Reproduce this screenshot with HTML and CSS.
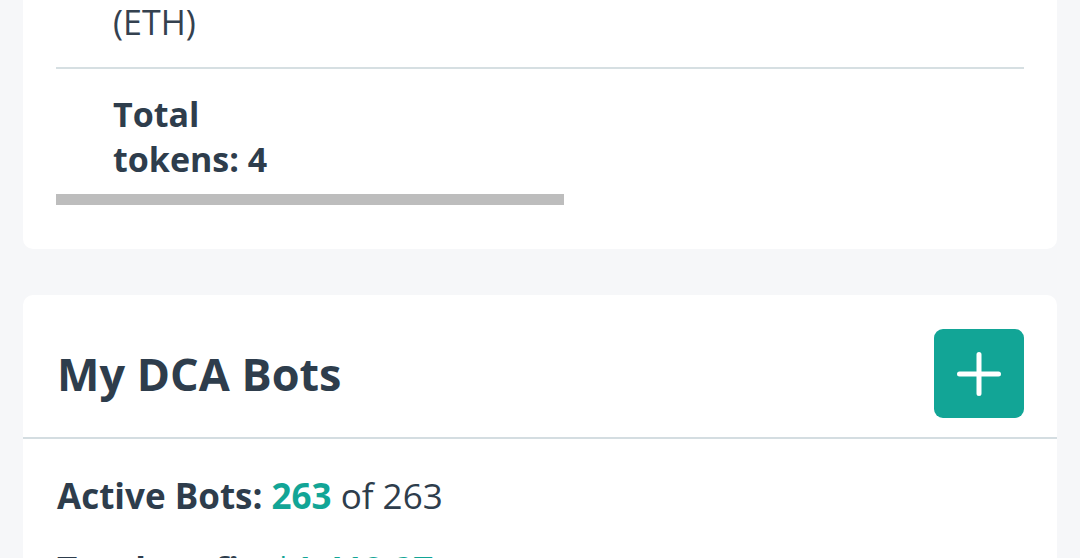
FILE: index.html
```html
<!DOCTYPE html>
<html>
<head>
    <title>Dashboard</title>
    <meta name="viewport" content="width=device-width, initial-scale=1" />
    <link rel="stylesheet" href="styles.css">
</head>
<body>
    <main class="page">
        <section class="card card-clipped">
            <div class="tokens">
                <div class="token-row bordered">
                    <div class="token-cell">(ETH)</div>
                </div>
                <div class="token-row">
                    <div class="token-cell total">Total tokens: 4</div>
                </div>
            </div>
            <div class="scrollbar"></div>
        </section>

        <section class="card">
            <header class="card-head">
                <h2>My DCA Bots</h2>
                <button type="button" class="add-btn" aria-label="Add bot">
                    <svg width="44" height="44" viewBox="0 0 44 44">
                        <path d="M22 2.5V41.5M2.5 22H41.5" stroke="#fff" stroke-width="5" stroke-linecap="round" fill="none" />
                    </svg>
                </button>
            </header>
            <div class="card-body">
                <p class="stat"><b>Active Bots:</b> <b class="teal">263</b> of 263</p>
                <p class="stat"><b>Total profit:</b> <b class="teal">$1,418.27</b></p>
            </div>
        </section>
    </main>
</body>
</html>
```

FILE: styles.css
```css
body {
    margin: 0;
    background-color: #f6f7f9;
    font-family: "Open Sans", "Noto Sans", sans-serif;
    color: #2e3d4c;
}

.page {
    padding: 0 23px;
}

.card {
    background-color: #fff;
    border-radius: 10px;
    margin-bottom: 46px;
}

.card-clipped {
    border-top-left-radius: 0;
    border-top-right-radius: 0;
    padding: 0 33px 44px 33px;
}

.token-row {
    padding: 23px 0 0 57px;
}

.token-row.bordered {
    padding: 0 0 22px 57px;
    border-bottom: 2px solid #d6dfe2;
}

.token-cell {
    font-size: 34px;
    line-height: 45px;
    color: #34414f;
}

.token-cell.total {
    width: 190px;
    font-weight: 700;
    color: #2e3d4c;
}

.scrollbar {
    margin-top: 12px;
    width: 508px;
    height: 11px;
    background-color: #bdbdbd;
}

.card-head {
    display: flex;
    align-items: center;
    justify-content: space-between;
    padding: 34px 33px 19px 34px;
    border-bottom: 2px solid #d4dde1;
}

.card-head h2 {
    margin: 0;
    font-size: 45px;
    font-weight: 700;
    line-height: 60px;
}

.add-btn {
    width: 90px;
    height: 89px;
    border: none;
    border-radius: 9px;
    background-color: #12a596;
    display: flex;
    align-items: center;
    justify-content: center;
    padding: 0;
    cursor: pointer;
}

.card-body {
    padding: 34px 34px;
}

.stat {
    margin: 0 0 29px 0;
    font-size: 35px;
    line-height: 45px;
}

.teal {
    color: #12a596;
}
```
